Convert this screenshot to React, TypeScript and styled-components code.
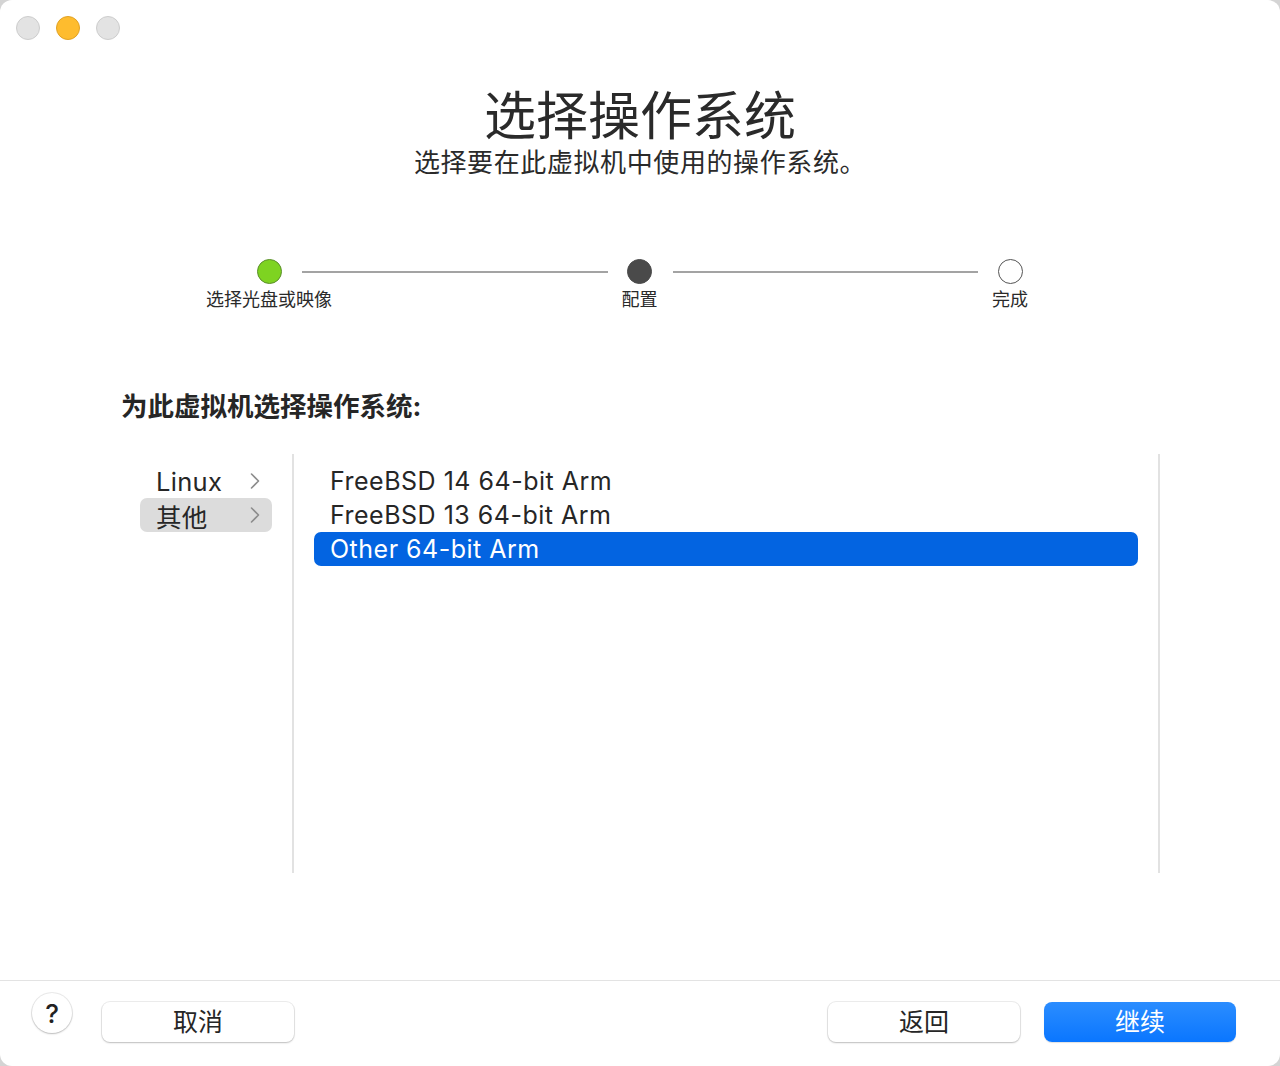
import React from "react";
import styled, { createGlobalStyle } from "styled-components";

const Global = createGlobalStyle`
  html, body { margin: 0; padding: 0; background: #d4d4d4; }
  body { font-family: "Inter", "Noto Sans CJK SC", sans-serif; color: #262626; }
  * { box-sizing: border-box; }
`;

const Window = styled.div`
  width: 1280px;
  height: 1066px;
  background: #ffffff;
  border-radius: 12px;
  display: flex;
  flex-direction: column;
  overflow: hidden;
`;

const TitleBar = styled.div`
  height: 56px;
  display: flex;
  align-items: center;
  gap: 16px;
  padding-left: 16px;
`;

const Light = styled.span<{ $color: string; $border: string }>`
  width: 24px;
  height: 24px;
  border-radius: 50%;
  background: ${(p) => p.$color};
  border: 1px solid ${(p) => p.$border};
`;

const Main = styled.div`
  flex: 1;
  display: flex;
  flex-direction: column;
`;

const Title = styled.h1`
  margin: 31px 0 0;
  font-size: 52px;
  line-height: 60px;
  font-weight: 400;
  text-align: center;
  color: #2a2a2a;
`;

const Subtitle = styled.p`
  margin: 1px 0 0;
  font-size: 26px;
  letter-spacing: 0.6px;
  line-height: 30px;
  text-align: center;
  color: #2a2a2a;
`;

const Stepper = styled.div`
  margin: 81px 0 0 257px;
  width: 765px;
  display: flex;
  align-items: flex-start;
`;

const Step = styled.div`
  width: 24px;
  display: flex;
  flex-direction: column;
  align-items: center;
  gap: 5px;
`;

const Dot = styled.span<{ $fill: string; $border: string }>`
  width: 25px;
  height: 25px;
  border-radius: 50%;
  background: ${(p) => p.$fill};
  border: 1px solid ${(p) => p.$border};
`;

const StepLabel = styled.span`
  white-space: nowrap;
  font-size: 18px;
  line-height: 22px;
  color: #2a2a2a;
`;

const Connector = styled.span`
  flex: 1;
  height: 2px;
  margin: 12px 20px 0 21px;
  background: #a3a3a3;
`;

const SectionHeading = styled.h2`
  margin: 78px 0 0 121px;
  font-size: 26.5px;
  line-height: 34px;
  font-weight: 700;
  color: #262626;
`;

const Browser = styled.div`
  margin: 31px 0 0 140px;
  width: 1020px;
  height: 419px;
  display: flex;
`;

const CategoryColumn = styled.div`
  width: 132px;
  margin-right: 20px;
  padding-top: 10px;
  display: flex;
  flex-direction: column;
`;

const CategoryRow = styled.div<{ $active?: boolean }>`
  height: 34px;
  padding: 0 11px 0 16px;
  display: flex;
  align-items: center;
  justify-content: space-between;
  border-radius: 7px;
  font-size: 25.5px;
  letter-spacing: 0.3px;
  color: #262626;
  background: ${(p) => (p.$active ? "#dcdcdc" : "transparent")};
`;

const Divider = styled.div`
  width: 2px;
  background: #e2e2e2;
`;

const ItemColumn = styled.div`
  flex: 1;
  padding: 10px 20px 0;
  display: flex;
  flex-direction: column;
`;

const Item = styled.div<{ $selected?: boolean }>`
  height: 34px;
  padding-left: 16px;
  display: flex;
  align-items: center;
  border-radius: 7px;
  font-size: 25px;
  letter-spacing: 0.5px;
  color: ${(p) => (p.$selected ? "#ffffff" : "#262626")};
  background: ${(p) => (p.$selected ? "#0364e1" : "transparent")};
`;

const Footer = styled.div`
  height: 86px;
  border-top: 1px solid #e3e3e3;
  padding: 12px 44px 0 32px;
  display: flex;
  align-items: flex-start;
`;

const HelpButton = styled.div`
  width: 40px;
  height: 40px;
  border-radius: 50%;
  background: #fff;
  box-shadow: 0 0 0 1px rgba(0, 0, 0, 0.08), 0 1px 2px rgba(0, 0, 0, 0.2);
  display: flex;
  align-items: center;
  justify-content: center;
  font-size: 26px;
  font-weight: 500;
  color: #222;
`;

const Button = styled.div<{ $primary?: boolean }>`
  width: 192px;
  height: 40px;
  margin-top: 9px;
  padding-bottom: 5px;
  border-radius: 8px;
  display: flex;
  align-items: center;
  justify-content: center;
  font-size: 25px;
  color: ${(p) => (p.$primary ? "#ffffff" : "#262626")};
  background: ${(p) =>
    p.$primary ? "linear-gradient(#2b8dff, #0a76ff)" : "#ffffff"};
  box-shadow: ${(p) =>
    p.$primary
      ? "0 1px 1px rgba(0,0,0,0.12)"
      : "0 0 0 1px rgba(0,0,0,0.07), 0 1px 2px rgba(0,0,0,0.2)"};
`;

const Spacer = styled.div`
  flex: 1;
`;

const Chevron = () => (
  <svg width="12" height="18" viewBox="0 0 12 18" fill="none">
    <path d="M2.5 2 L9.5 9 L2.5 16" stroke="#8c8c8c" strokeWidth="1.6" strokeLinecap="round" strokeLinejoin="round" />
  </svg>
);

export default function App() {
  return (
    <>
      <Global />
      <Window>
        <TitleBar>
          <Light $color="#e3e3e3" $border="#cdcdcd" />
          <Light $color="#febc2e" $border="#e1a224" />
          <Light $color="#e3e3e3" $border="#cdcdcd" />
        </TitleBar>
        <Main>
          <Title>选择操作系统</Title>
          <Subtitle>选择要在此虚拟机中使用的操作系统。</Subtitle>
          <Stepper>
            <Step>
              <Dot $fill="#7ed321" $border="#5b8f2b" />
              <StepLabel>选择光盘或映像</StepLabel>
            </Step>
            <Connector />
            <Step>
              <Dot $fill="#4a4a4a" $border="#4a4a4a" />
              <StepLabel>配置</StepLabel>
            </Step>
            <Connector />
            <Step>
              <Dot $fill="#ffffff" $border="#555555" />
              <StepLabel>完成</StepLabel>
            </Step>
          </Stepper>
          <SectionHeading>为此虚拟机选择操作系统:</SectionHeading>
          <Browser>
            <CategoryColumn>
              <CategoryRow>
                Linux <Chevron />
              </CategoryRow>
              <CategoryRow $active>
                其他 <Chevron />
              </CategoryRow>
            </CategoryColumn>
            <Divider />
            <ItemColumn>
              <Item>FreeBSD 14 64-bit Arm</Item>
              <Item>FreeBSD 13 64-bit Arm</Item>
              <Item $selected>Other 64-bit Arm</Item>
            </ItemColumn>
            <Divider />
          </Browser>
        </Main>
        <Footer>
          <HelpButton>?</HelpButton>
          <Button style={{ marginLeft: 30 }}>取消</Button>
          <Spacer />
          <Button>返回</Button>
          <Button $primary style={{ marginLeft: 24 }}>继续</Button>
        </Footer>
      </Window>
    </>
  );
}
